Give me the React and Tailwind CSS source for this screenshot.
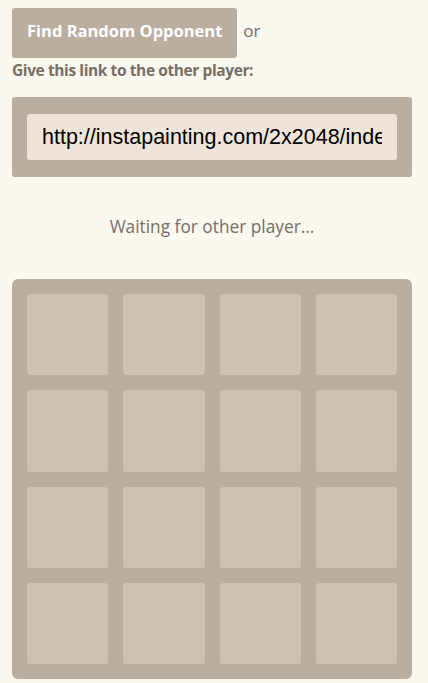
import React from "react";

export default function App() {
  const tiles = Array.from({ length: 16 });
  return (
    <div className="min-h-screen bg-[#faf8ef] px-3 pt-2 text-[#776e65]" style={{ fontFamily: '"Open Sans", "Noto Sans", sans-serif' }}>
      <div className="w-[400px]">
        <div className="flex items-center">
          <button className="h-[50px] px-[15px] pb-[4px] rounded-[3px] bg-[#bbada0] text-white font-bold text-[16.5px]">
            Find Random Opponent
          </button>
          <span className="ml-[6px] mb-[4px] text-[17px]">or</span>
        </div>
        <div className="font-bold text-[15.5px] leading-[24px] tracking-[-0.4px]">Give this link to the other player:</div>
        <div className="mt-[15px] rounded-[3px] bg-[#bbada0] px-[15px] py-[17px]">
          <input
            readOnly
            value="http://instapainting.com/2x2048/index.html?room=4f9a2c"
            className="block w-full h-[46px] rounded-[3px] bg-[#eee4da] px-[15px] text-[21.5px] text-black outline-none"
            style={{ fontFamily: '"Liberation Sans", Arial, sans-serif' }}
          />
        </div>
        <div className="mt-[38px] text-center text-[17.3px] leading-[24px]">Waiting for other player...</div>
        <div className="mt-[40px] h-[400px] rounded-[6px] bg-[#bbada0] p-[15px] grid grid-cols-4 grid-rows-4 gap-[15px]">
          {tiles.map((_, i) => (
            <div key={i} className="rounded-[3px] bg-[#cdc1b4]" />
          ))}
        </div>
      </div>
    </div>
  );
}
